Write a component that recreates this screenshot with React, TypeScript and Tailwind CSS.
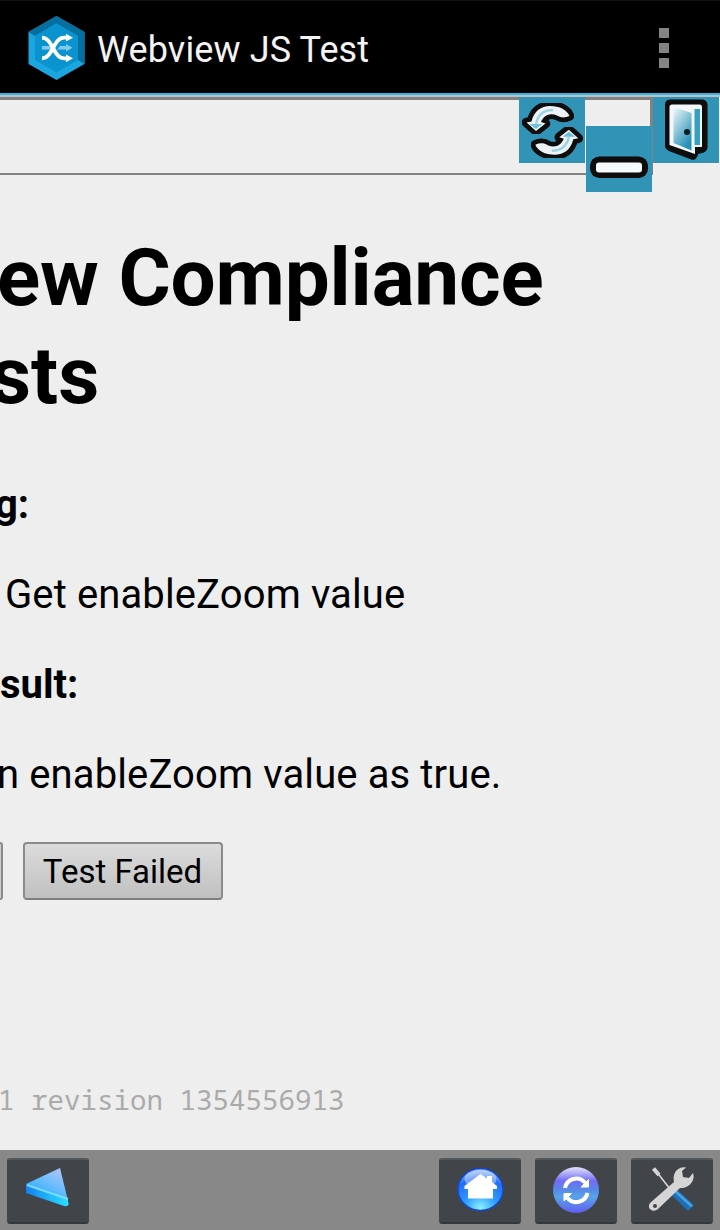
import React from "react";

const Hex = () => (
  <svg width="58" height="66" viewBox="28 15 58 66" className="mt-[2px] shrink-0">
    <path d="M56.5 16L84.500 32V64L56.500 80L28.500 64V32Z" fill="#1ba6e0" />
    <path d="M56.500 16L84.500 32V64L78 60V36L56.500 23.500L35 36L28.500 32Z" fill="#056f9f" />
    <path d="M56.500 23.500L78 36V60L56.500 72.500L35 60V36Z" fill="#0a93cf" />
    <path d="M42 47.800H69" stroke="#7fcaec" strokeWidth="3.600" />
    <path d="M66 44L72.500 47.800L66 51.500Z" fill="#7fcaec" />
    <path d="M50 55L61 39" fill="none" stroke="#0a93cf" strokeWidth="6" />
    <g fill="none" stroke="#fff" strokeWidth="3.800">
      <path d="M42 37.700C53 37.700 53 58.300 64 58.300H68" />
      <path d="M42 58.300C53 58.300 53 37.700 64 37.700H68" />
    </g>
    <path d="M66 33.800L73 37.700L66 41.600ZM66 54.400L73 58.300L66 62.200Z" fill="#fff" />
  </svg>
);

const Tile = ({ className = "", children }: { className?: string; children: React.ReactNode }) => (
  <div className={"h-[66px] w-[66px] bg-[#3194b6] " + className}>
    <svg width="66" height="66" viewBox="0 0 66 66">{children}</svg>
  </div>
);

const arrow = "M7.500 25.500L12.500 24.500C15 14 22 9 31 9C41 9 48 13 50.500 19C46 21 42 21 38 18.500C31 15.500 25 18 22 25L26.500 26.500L17 34Z";

const Sync = () => (
  <Tile>
    <defs>
      <filter id="soft"><feGaussianBlur stdDeviation="0.6" /></filter>
    </defs>
    {["", "rotate(180 33.400 33.400)"].map((t) => (
      <g key={t} transform={t} filter="url(#soft)">
        <path d={arrow} fill="#080808" stroke="#080808" strokeWidth="9.500" strokeLinejoin="round" />
        <path d={arrow} fill="#edf3f6" />
        <path d="M10.500 27H23L17 32Z" fill="#6cbfdc" />
        <path d="M17 27C19 17 25 13 34 13" fill="none" stroke="#9ed3e5" strokeWidth="2.500" />
      </g>
    ))}
  </Tile>
);

const Minus = () => (
  <Tile className="mt-[29px] ml-px">
    <g filter="url(#soft)">
      <rect x="4" y="30.500" width="58" height="21.500" rx="9.500" fill="#070707" />
      <rect x="10" y="36.500" width="46" height="10" rx="3" fill="#f8fbfd" />
    </g>
  </Tile>
);

const Door = () => (
  <Tile className="ml-px">
    <defs>
      <linearGradient id="dr" x1="0" y1="0" x2=".6" y2="1"><stop offset="0" stopColor="#f4f9fb" /><stop offset="1" stopColor="#2590b6" /></linearGradient>
    </defs>
    <g filter="url(#soft)">
      <path d="M18 2.500H48C52 2.500 54.500 4.500 54.500 8V50C54.500 53 52 55.500 49 56L45 57C44 62 41 64 37 62L16 54C13 52 12 51 12 48V8C12 4 14 2.500 18 2.500Z" fill="#080808" />
      <path d="M19 7.500H47Q49 7.500 49 10V50H42V57L16.500 48V10Q16.500 7.500 19 7.500Z" fill="#f4f7f9" />
      <path d="M20.500 10L38.500 16V53.500L20.500 46Z" fill="url(#dr)" />
      <path d="M41.500 12H47V48H41.500Z" fill="#379fc4" />
      <circle cx="34" cy="35" r="3" fill="#0a1a22" />
    </g>
  </Tile>
);

const BarButton = ({ children, className = "" }: { children: React.ReactNode; className?: string }) => (
  <button className={"h-[66px] w-[82px] shrink-0 rounded-[3px] border border-t-2 border-b-2 border-[#42464a] border-t-[#53585b] border-b-[#36393c] bg-[#414549] " + className}>
    <svg width="80" height="62" viewBox="0 0 80 62">{children}</svg>
  </button>
);

export default function App() {
  return (
    <div className="flex h-[1230px] w-[720px] flex-col overflow-hidden bg-[#eee] font-['Roboto',sans-serif] text-black">
      <header className="flex h-[95px] shrink-0 items-center border-t border-b-2 border-t-[#111] border-b-[#33b5e5] bg-black pr-[51px] pl-[28px]">
        <Hex />
        <span className="mt-[6px] ml-[11px] text-[36px] leading-[44px] tracking-[0.12px] whitespace-nowrap text-[#f3f3f3]">Webview JS Test</span>
        <div className="mt-[2px] ml-auto flex flex-col gap-[5px]">
          <i className="h-[10px] w-[10px] bg-[#848484]" />
          <i className="h-[10px] w-[10px] bg-[#848484]" />
          <i className="h-[10px] w-[10px] bg-[#848484]" />
        </div>
      </header>
      <div className="relative h-[80px] shrink-0 border-t-2 border-[#bfbfbf]">
        <div className="h-[78px] w-[653px] border-t-[3px] border-r-[3px] border-b-2 border-[#828282]" />
        <div className="absolute top-0 left-[519px] flex items-start">
          <Sync />
          <Minus />
          <Door />
        </div>
      </div>
      <main className="flex h-[975px] shrink-0 flex-col pt-[54px] whitespace-nowrap">
        <h1 className="text-[80px] leading-[98px] font-bold">
          <span className="-ml-[3px] block tracking-[-0.15px]">ew Compliance</span>
          <span className="-ml-[10px] block">sts</span>
        </h1>
        <div className="mt-[56px] flex flex-col gap-[42px] text-[40px] leading-[48px]">
          <b className="-ml-[5px]">g:</b>
          <span className="ml-[5px] tracking-[0.12px]">Get enableZoom value</span>
          <b>sult:</b>
          <span className="-ml-[3px] tracking-[0.12px]">n enableZoom value as true.</span>
        </div>
        <div className="mt-[43px] flex gap-[20px]">
          <div className="h-[58px] w-[2.500px] rounded-r-[3px] border-2 border-l-0 border-[#8b8b8b] bg-[#ccc]" />
          <button className="h-[58px] w-[200px] rounded-[4px] border-2 border-[#8b8b8b] border-b-[#7e7e7e] bg-linear-to-b from-[#dcdcdc] to-[#c0c0c0] pt-[2px] text-[33px] leading-[52px]">Test Failed</button>
        </div>
        <footer className="mt-[184px] -ml-[2px] font-['Noto_Sans_Mono','DejaVu_Sans_Mono',monospace] text-[27.5px] leading-[32px] text-[#aaa]">1 revision 1354556913</footer>
      </main>
      <nav className="flex h-[80px] shrink-0 items-start gap-[14px] bg-[#888] px-[7px] pt-[8px]">
        <BarButton className="mr-auto">
          <defs>
            <linearGradient id="tri" x1="1" y1="0" x2=".4" y2="1"><stop offset="0" stopColor="#c2c8f3" /><stop offset=".6" stopColor="#5abaff" /><stop offset="1" stopColor="#139aff" /></linearGradient>
            <linearGradient id="edge"><stop offset="0" stopColor="#1481f4" /><stop offset="1" stopColor="#2be0ff" /></linearGradient>
          </defs>
          <g transform="translate(0 -1)" filter="url(#soft)">
            <path d="M18 25L52 9L61 46L18 33Z" fill="url(#tri)" />
            <path d="M18 25L60 39.500V46Q59 48 56 47L18 34Z" fill="url(#edge)" />
            <path d="M19 26L60 40" stroke="#79dcff" strokeWidth="2" />
          </g>
        </BarButton>
        <BarButton>
          <defs>
            <radialGradient id="hm" cx=".5" cy=".95" r=".9"><stop offset="0" stopColor="#8ff4ff" /><stop offset=".4" stopColor="#309cff" /><stop offset=".8" stopColor="#216cf5" /><stop offset="1" stopColor="#87b1ff" /></radialGradient>
          </defs>
          <g filter="url(#soft)">
            <ellipse cx="40.500" cy="29.500" rx="22.500" ry="21" fill="url(#hm)" stroke="#1048cf" strokeWidth="1.400" />
            <ellipse cx="40.500" cy="19" rx="16" ry="9" fill="#fff" opacity=".4" />
            <path d="M40.500 14L47 18.500V16H52V22L57 26V29H53V38.500H28V29H24.500V26Z" fill="#fff" />
          </g>
        </BarButton>
        <BarButton>
          <defs>
            <linearGradient id="rf" x1="0" y1="0" x2="0" y2="1"><stop offset="0" stopColor="#e6e4fb" /><stop offset=".3" stopColor="#716cf5" /><stop offset=".5" stopColor="#578ae6" /><stop offset=".65" stopColor="#58a3e8" /><stop offset="1" stopColor="#625df2" /></linearGradient>
          </defs>
          <g filter="url(#soft)">
            <circle cx="40" cy="30" r="23" fill="url(#rf)" />
            <path d="M29 28A11.500 11.500 0 0 1 49 22.500M51.500 33A11.500 11.500 0 0 1 31.500 38" fill="none" stroke="#fff" strokeWidth="4" />
            <path d="M45 27L52.500 19.500V27ZM35.500 33.500L28 41V33.500Z" fill="#fff" stroke="#fff" strokeWidth="1" />
          </g>
        </BarButton>
        <BarButton>
          <g filter="url(#soft)">
            <path d="M24 11L38 29" stroke="#d6d6d6" strokeWidth="1.600" />
            <path d="M21.500 8.500L27 15" stroke="#d6d6d6" strokeWidth="4" />
            <path d="M41 31L59 48" stroke="#1c70b8" strokeWidth="8" />
            <path d="M43 31L60 46.500" stroke="#4ba0e2" strokeWidth="2.500" />
            <path d="M18 43L42 22C40 13 46 6 54 7.500L50 11L51 17L57 18L61 13C64 21 56 29 48 28L27 48C22 54 14 49 18 43Z" fill="#d5d5d5" />
            <circle cx="23" cy="46" r="2" fill="#444" />
          </g>
        </BarButton>
      </nav>
    </div>
  );
}
